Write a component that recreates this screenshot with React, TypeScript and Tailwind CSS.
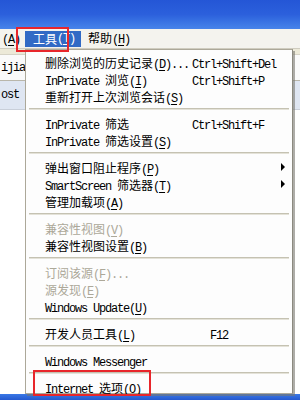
import type { ReactNode } from 'react';

const CN = "font-['Noto_Sans_CJK_SC',sans-serif]";
const MONO = "font-['Liberation_Mono',monospace] text-[12px] tracking-[-1.2px]";

// "&X" marks the mnemonic letter, ASCII runs use the mono face
function Txt({ s }: { s: string }) {
  const chars: { ch: string; a: boolean; u: boolean }[] = [];
  for (let i = 0; i < s.length; i++) {
    let u = false;
    if (s[i] === '&' && i + 1 < s.length) {
      u = true;
      i++;
    }
    const ch = s[i];
    chars.push({ ch, a: ch.charCodeAt(0) < 128, u });
  }
  const runs: { t: string; a: boolean; u: boolean }[] = [];
  for (const c of chars) {
    const last = runs[runs.length - 1];
    if (last && last.a === c.a && last.u === c.u) last.t += c.ch;
    else runs.push({ t: c.ch, a: c.a, u: c.u });
  }
  return (
    <>
      {runs.map((r, i) => (
        <span
          key={i}
          className={[r.a ? MONO : 'text-[12px]', r.u ? 'underline underline-offset-2' : ''].join(' ')}
        >
          {r.t}
        </span>
      ))}
    </>
  );
}

function Item({
  label,
  sc,
  arrow,
  disabled,
  children,
}: {
  label: string;
  sc?: string;
  arrow?: boolean;
  disabled?: boolean;
  children?: ReactNode;
}) {
  return (
    <div
      className={`relative flex h-[17px] items-center whitespace-pre pl-[19px] pr-[7px] leading-none ${
        disabled ? 'text-[#aca899]' : 'text-black'
      }`}
    >
      <div className="w-[147px] shrink-0">
        <Txt s={label} />
      </div>
      <div className="flex-1">{sc && <Txt s={sc} />}</div>
      {arrow && (
        <div className="h-0 w-0 border-y-[4px] border-l-[4px] border-y-transparent border-l-black" />
      )}
      {children}
    </div>
  );
}

function Sep() {
  return (
    <div className="flex h-[10px] items-center px-[3px]">
      <div className="h-[2px] w-full border-t border-b border-t-[#c5c2b2] border-b-[#e4e2d8]" />
    </div>
  );
}

export default function App() {
  return (
    <div className={`relative flex h-[400px] w-[300px] flex-col overflow-hidden bg-white ${CN}`}>
      {/* title bar */}
      <div className="h-[29px] shrink-0 bg-gradient-to-b from-[#2456d6] via-[#2c60dc] to-[#4784ea]" />

      {/* menu bar */}
      <div className="flex h-[20px] shrink-0 items-center border-b border-[#cfccbf] bg-[#f4f3ee] text-[12px] leading-none">
        <div className="w-[25px] pl-[2px]">
          <Txt s="(&A)" />
        </div>
        <div className="flex h-[16px] w-[56px] items-center bg-[#316ac5] pl-[8px] text-white">
          <Txt s="工具(&T)" />
        </div>
        <div className="pl-[7px]">
          <Txt s="帮助(&H)" />
        </div>
      </div>

      {/* page behind the menu */}
      <div className="flex flex-1 flex-col">
        <div className="h-[6px] border-b border-[#d6d3c6] bg-[#ece9d8]" />
        <div className="flex h-[26px] items-center border-b border-[#b9b6aa] bg-[#fafafa] pl-[1px]">
          <Txt s="ijia" />
        </div>
        <div className="flex h-[29px] items-center border-b border-[#c9cfd9] bg-[#dfe6f2] pl-[1px]">
          <Txt s="ost 1" />
        </div>
        <div className="flex-1 bg-white" />
      </div>

      {/* taskbar */}
      <div className="h-[6px] shrink-0 bg-gradient-to-b from-[#3a78e6] to-[#2458cf]" />

      {/* the Tools dropdown */}
      <div className="absolute left-[25px] top-[49px] h-[345px] w-[268px] border border-[#aca899] border-r-[#8c8a80] bg-[#fdfdfd] pt-[3px] shadow-[2px_2px_0_rgba(120,118,110,0.6)]">
        <Item label="删除浏览的历史记录(&D)..." sc="Ctrl+Shift+Del" />
        <Item label="InPrivate 浏览(&I)" sc="Ctrl+Shift+P" />
        <Item label="重新打开上次浏览会话(&S)" />
        <Sep />
        <Item label="InPrivate 筛选" sc="Ctrl+Shift+F" />
        <Item label="InPrivate 筛选设置(&S)" />
        <Sep />
        <Item label="弹出窗口阻止程序(&P)" arrow />
        <Item label="SmartScreen 筛选器(&T)" arrow />
        <Item label="管理加载项(&A)" />
        <Sep />
        <Item label="兼容性视图(&V)" disabled />
        <Item label="兼容性视图设置(&B)" />
        <Sep />
        <Item label="订阅该源(&F)..." disabled />
        <Item label="源发现(&E)" disabled />
        <Item label="Windows Update(&U)" />
        <Sep />
        <Item label="开发人员工具(&L)" sc="   F12" />
        <Sep />
        <Item label="Windows Messenger" />
        <Sep />
        <Item label="Internet 选项(&O)" />
      </div>

      {/* red highlight frames */}
      <div className="pointer-events-none absolute left-[16px] top-[27px] h-[25px] w-[53px] border-2 border-[#e8262b]" />
      <div className="pointer-events-none absolute left-[33px] top-[370px] h-[26px] w-[118px] border-2 border-[#e8262b]" />
    </div>
  );
}
